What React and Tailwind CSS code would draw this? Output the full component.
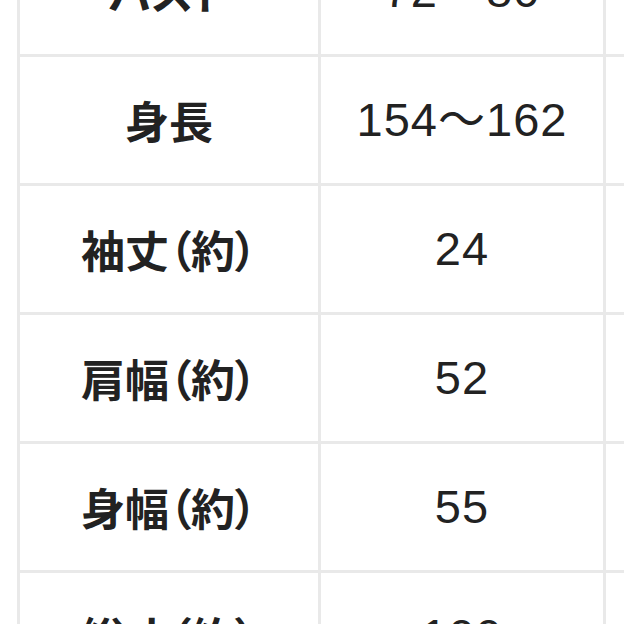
import React from "react";

const rows = [
  { label: "バスト", value: "72～80" },
  { label: "身長", value: "154～162" },
  { label: "袖丈（約）", value: "24" },
  { label: "肩幅（約）", value: "52" },
  { label: "身幅（約）", value: "55" },
  { label: "総丈（約）", value: "100" },
];

export default function App() {
  return (
    <div
      className="w-[624px] h-[624px] overflow-hidden bg-white text-[#222]"
      style={{ fontFamily: '"Noto Sans CJK JP", "Noto Sans", sans-serif' }}
    >
      <div className="ml-[17px] -mt-[72px] w-[700px] border-l-[3px] border-[#e9e9e9]">
        {rows.map((row, i) => (
          <div key={i} className="flex h-[129px] border-b-[3px] border-[#e9e9e9]">
            <div className="w-[301px] flex items-center justify-center border-r-[3px] border-[#e9e9e9] text-[44px] font-bold [font-feature-settings:'palt']">
              {row.label}
            </div>
            <div
              className="w-[285px] flex items-center justify-center border-r-[3px] border-[#e9e9e9] text-[47px] tracking-[1px]"
              style={{ fontFamily: '"Liberation Sans", "Noto Sans CJK JP", sans-serif' }}
            >
              {row.value}
            </div>
            <div className="flex-1" />
          </div>
        ))}
      </div>
    </div>
  );
}
